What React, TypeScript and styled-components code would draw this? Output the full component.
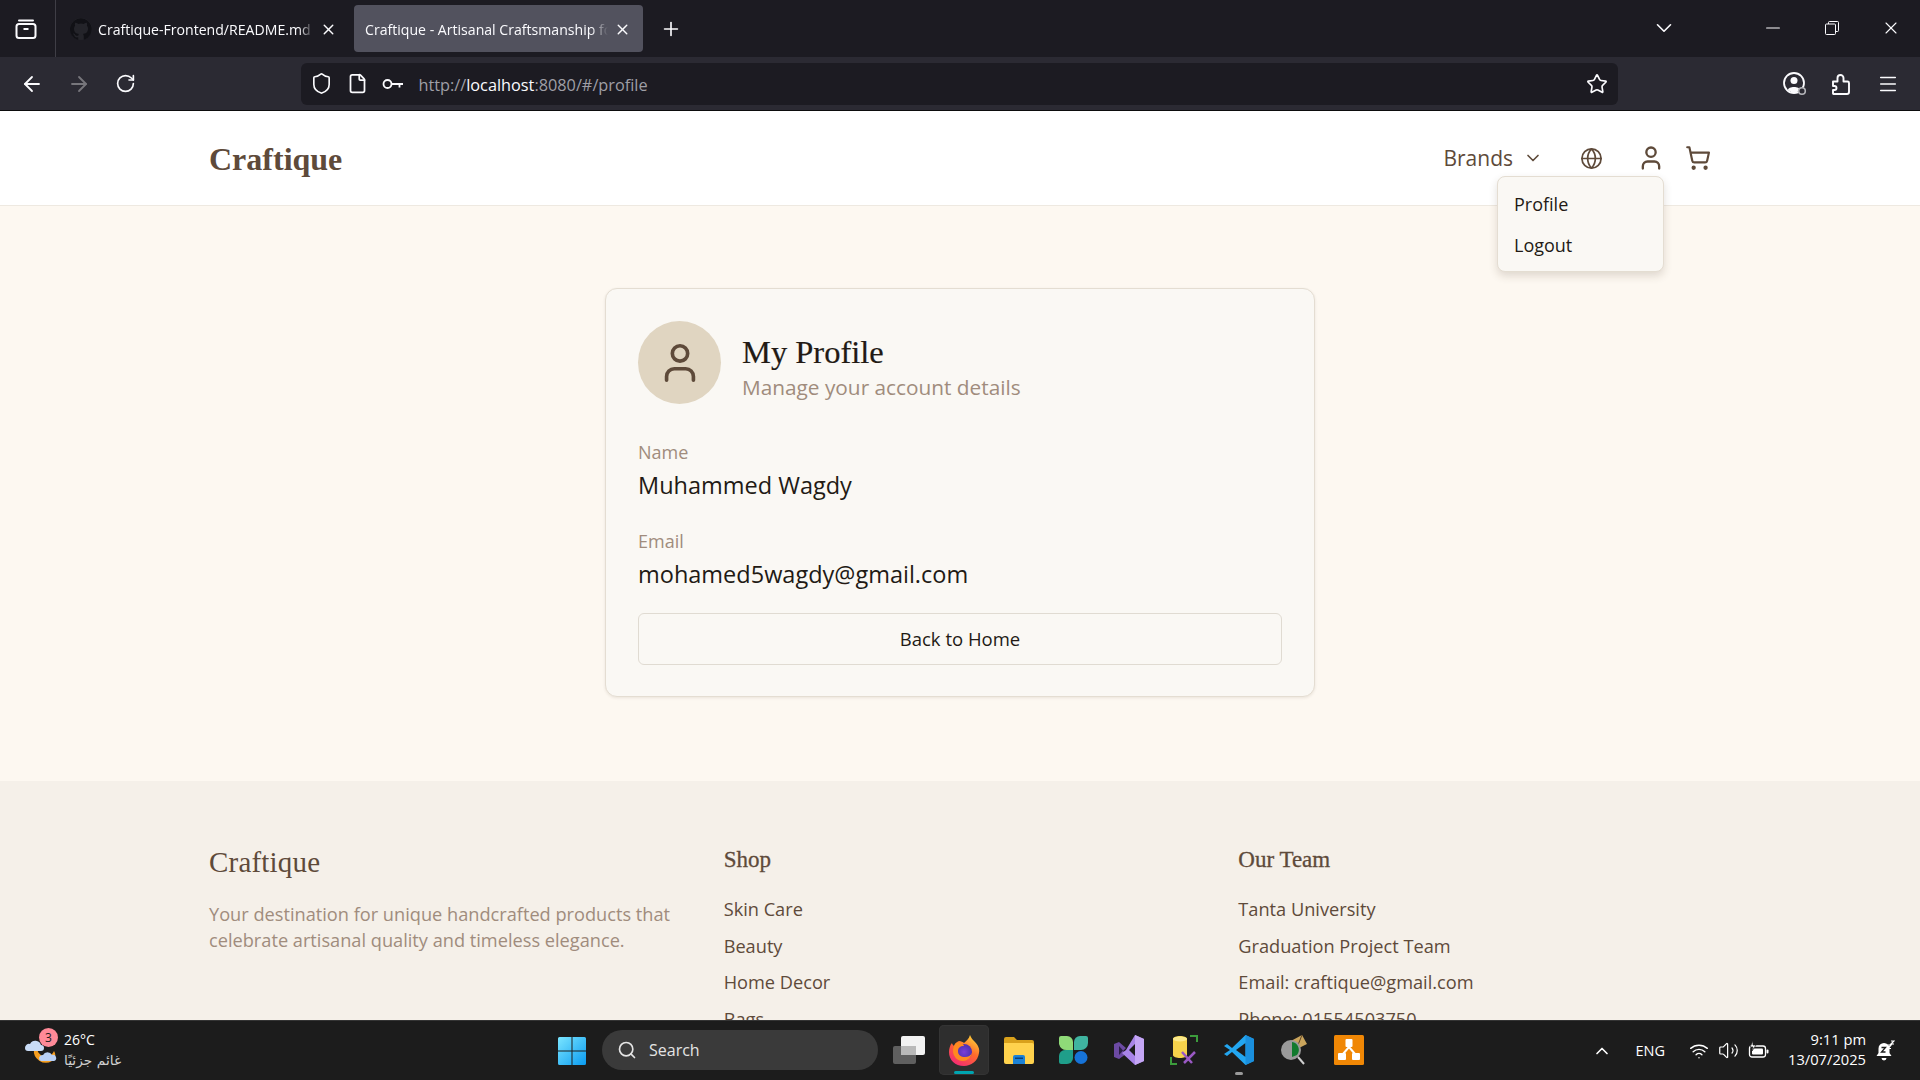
import React from 'react';
import styled, { createGlobalStyle } from 'styled-components';
import { ArrowLeft, ArrowRight, RotateCw, Shield, File, Star, Menu, X, Plus, ChevronDown, ChevronUp, Minus, Globe, User, ShoppingCart, Search, Wifi, Volume2 } from 'lucide-react';

const Global = createGlobalStyle`
  html, body { margin: 0; padding: 0; height: 100%; overflow: hidden; }
  body { font-family: "Open Sans", "Noto Sans", sans-serif; background: #fdf8f1; }
  * { box-sizing: border-box; }
`;

const SERIF = `"Liberation Serif", "Times New Roman", serif`;

const Screen = styled.div`
  width: 1920px; height: 1080px; display: flex; flex-direction: column; overflow: hidden;
`;

/* Browser chrome */
const TabRow = styled.div`
  height: 57px; background: #1c1b22; display: flex; align-items: stretch; color: #fbfbfe; flex: none;
`;
const TabManager = styled.div`
  width: 56px; display: flex; align-items: center; justify-content: center; padding-right: 3px; border-right: 1px solid #3f3e46;
`;
const Tab = styled.div<{ $active?: boolean }>`
  width: 289px; height: 47px; margin: 5px 0 0 ${p => (p.$active ? 5 : 4)}px; border-radius: 4px;
  background: ${p => (p.$active ? '#52525e' : 'transparent')};
  display: flex; align-items: center; padding: 1px 12px 0 ${p => (p.$active ? 11 : 10)}px; gap: 6px;
`;
const TabTitle = styled.span`
  flex: 1; font-size: 14.1px; white-space: nowrap; overflow: hidden; color: #fbfbfe;
  mask-image: linear-gradient(to right, #000 93%, transparent 100%);
`;
const NewTab = styled.div`
  width: 50px; margin-left: 3px; display: flex; align-items: center; justify-content: center;
`;
const Spacer = styled.div`flex: 1;`;
const TabListBtn = styled.div`
  width: 50px; margin-right: 54px; display: flex; align-items: center; justify-content: center; padding-bottom: 2px;
`;
const WinBtn = styled.div`
  width: 59px; display: flex; align-items: center; justify-content: center; padding-bottom: 1px;
`;
const Toolbar = styled.div`
  height: 54px; background: #2b2a33; border-bottom: 1px solid #0c0c0d; display: flex; align-items: center; padding: 0 9px; flex: none; color: #fbfbfe;
`;
const ToolBtn = styled.div<{ $dim?: boolean }>`
  width: 46.5px; height: 40px; display: flex; align-items: center; justify-content: center;
  color: ${p => (p.$dim ? '#77767c' : '#fbfbfe')};
`;
const UrlBar = styled.div`
  width: 1317px; height: 42px; margin: 0 154px 0 153px; background: #1c1b22; border-radius: 6px; display: flex; align-items: center; padding: 0 3px 0 2px;
`;
const UrlIcon = styled.div`
  width: 36px; display: flex; align-items: center; justify-content: center; flex: none;
`;
const UrlText = styled.div`
  flex: 1; font-size: 16.3px; color: #9f9fa6; padding: 2px 0 0 7px; white-space: nowrap;
  b { font-weight: 400; color: #fbfbfe; }
`;

/* Page */
const Viewport = styled.div`
  flex: 1; min-height: 0; overflow: hidden; position: relative; background: #fdf8f1;
`;
const Header = styled.header`
  height: 95px; background: #fff; border-bottom: 1px solid #eee9e1; position: relative;
`;
const Container = styled.div`
  width: 1504px; margin: 0 auto; height: 100%; display: flex; align-items: center; justify-content: space-between;
`;
const Logo = styled.div`
  font-family: ${SERIF}; font-weight: 700; font-size: 32px; color: #5e4a3a; padding: 2px 0 0 1px; line-height: 1;
`;
const Nav = styled.nav`
  display: flex; align-items: center; color: #5e4a3a; padding-right: 1px;
`;
const BrandsLink = styled.div`
  font-size: 21px; display: flex; align-items: center; gap: 10px; margin-right: 37px; line-height: 1;
`;
const NavIcon = styled.div<{ $mr: number }>`
  display: flex; margin-right: ${p => p.$mr}px;
`;
const Dropdown = styled.div`
  position: absolute; top: 65px; left: 1497px; width: 167px; height: 96px; background: #faf8f4;
  border: 1px solid #e4ddd2; border-radius: 8px; box-shadow: 0 4px 8px rgba(70, 50, 30, .16); padding: 6px 0; z-index: 5;
`;
const DropItem = styled.div`
  height: 41px; padding-left: 16px; display: flex; align-items: center; font-size: 18px; color: #221a14;
`;
const Main = styled.main`
  height: 575px; padding-top: 82px; display: flex; justify-content: center; background: #fdf8f1;
`;
const Card = styled.section`
  width: 710px; height: 409px; background: #faf8f4; border: 1px solid #e4ddd2; border-radius: 12px; padding: 32px;
  box-shadow: 0 1px 3px rgba(70, 50, 30, .1);
`;
const CardHead = styled.div`
  display: flex; align-items: center; gap: 21px; margin-bottom: 35px;
`;
const Avatar = styled.div`
  width: 83px; height: 83px; border-radius: 50%; background: #e0d5c1; color: #5e4a3a;
  display: flex; align-items: center; justify-content: center;
`;
const TitleBlock = styled.div`
  padding-top: 8px;
`;
const Title = styled.h1`
  margin: 0; font-family: ${SERIF}; font-weight: 400; font-size: 32.5px; line-height: 38px; color: #221a14;
  -webkit-text-stroke: .2px #221a14;
`;
const Subtitle = styled.p`
  margin: 2px 0 0; font-size: 20.8px; line-height: 28px; color: #a08c7d;
`;
const Field = styled.div`
  margin-bottom: 26px;
  &:last-of-type { margin-bottom: 22px; }
`;
const Label = styled.div`
  font-size: 18px; line-height: 26px; color: #a08c7d; margin-bottom: 3px;
`;
const Value = styled.div`
  font-size: 23.5px; line-height: 34px; color: #221a14;
`;
const BackButton = styled.button`
  width: 100%; height: 52px; background: #faf8f4; border: 1px solid #e0dbd2; border-radius: 6px; padding: 0 0 2px;
  font-family: inherit; font-size: 18.5px; font-weight: 500; color: #221a14;
`;
const Footer = styled.footer`
  background: #f5f0e9; height: 300px; padding-top: 63px;
`;
const FootGrid = styled.div`
  width: 1504px; margin: 0 auto; display: grid; grid-template-columns: repeat(3, 1fr); gap: 40px;
`;
const FootLogo = styled.div`
  font-family: ${SERIF}; font-size: 29px; line-height: 36px; color: #5e4a3a; padding-left: 1px; letter-spacing: .2px;
`;
const FootText = styled.p`
  margin: 21px 0 0; font-size: 18.2px; line-height: 26px; color: #a08c7d; padding-left: 1px;
`;
const FootCol = styled.div`
  padding-left: 1px;
`;
const FootHead = styled.h3`
  margin: 0 0 15px; font-family: ${SERIF}; font-size: 23px; font-weight: 400; line-height: 32px; color: #5e4a3a;
  -webkit-text-stroke: .3px #5e4a3a;
`;
const FootLink = styled.div`
  font-size: 18.2px; line-height: 36.6px; color: #5e4a3a; white-space: nowrap;
`;

/* Taskbar */
const Taskbar = styled.div`
  height: 60px; flex: none; background: #1c1c1c; border-top: 1px solid #343434; display: flex; align-items: stretch; color: #fff;
`;
const Weather = styled.div`
  width: 544px; display: flex; align-items: center; padding-left: 24px; position: relative;
`;
const Badge = styled.div`
  position: absolute; left: 39px; top: 7px; width: 19px; height: 19px; border-radius: 50%; background: #ff8a98; color: #1c1c1c;
  font-size: 12px; display: flex; align-items: center; justify-content: center;
`;
const WeatherText = styled.div`
  margin: -2px 0 0 7px; display: flex; flex-direction: column; gap: 2px;
`;
const Temp = styled.div`font-size: 14px; line-height: 19px; color: #fff;`;
const Cond = styled.div`font-family: "DejaVu Sans", sans-serif; font-size: 13.8px; line-height: 18px; color: #d0d0d0;`;
const StartBtn = styled.div`
  width: 55px; display: flex; align-items: center; justify-content: center;
`;
const SearchPill = styled.div`
  width: 276px; height: 40px; margin: 9px 3px 0 3px; border-radius: 20px; background: #3a3a3a; display: flex; align-items: center;
  padding-left: 15px; gap: 12px; font-size: 16px; color: #e4e4e4;
`;
const TaskBtn = styled.div<{ $active?: boolean }>`
  width: 50px; height: 50px; margin: 4px 2.5px 0; border-radius: 5px; position: relative; display: flex; align-items: center; justify-content: center;
  background: ${p => (p.$active ? '#2e2e2e' : 'transparent')};
  box-shadow: ${p => (p.$active ? 'inset 0 0 0 1px #343434' : 'none')};
`;
const RunDot = styled.div<{ $active?: boolean }>`
  position: absolute; bottom: ${p => (p.$active ? 1 : 0)}px; left: 50%; transform: translateX(-50%); height: 3px; border-radius: 2px;
  width: ${p => (p.$active ? 20 : 8)}px; background: ${p => (p.$active ? '#00a4b0' : '#9a9a9a')};
`;
const Tray = styled.div`
  margin-left: auto; display: flex; align-items: center; padding-right: 25px; color: #fff;
`;
const Lang = styled.div`font-size: 14.5px; margin: 0 24px 0 24px;`;
const TrayIcon = styled.div<{ $mr?: number }>`
  display: flex; margin-right: ${p => p.$mr ?? 9}px;
`;
const Clock = styled.div`
  text-align: right; font-size: 14.7px; line-height: 20px; margin: 0 9px 4px 18px;
`;

const GitHubMark = () => (
  <svg width="22" height="22" viewBox="0 0 16 16"><circle cx="8" cy="8" r="8" fill="#24242a"/><path fill="#111116" d="M8 .2a8 8 0 0 0-2.5 15.6c.4.1.5-.2.5-.4v-1.4c-2.2.5-2.7-1-2.7-1-.4-.9-.9-1.200-.9-1.200-.7-.5.1-.5.1-.5.8.100 1.200.8 1.200.8.7 1.200 1.900.900 2.300.7.100-.5.300-.9.500-1.100-1.800-.2-3.600-.9-3.600-4 0-.9.300-1.600.800-2.100-.1-.2-.4-1 .1-2.100 0 0 .7-.2 2.200.8a7.600 7.600 0 0 1 4 0c1.500-1 2.200-.8 2.200-.8.4 1.100.2 1.900.1 2.100.5.600.8 1.300.8 2.100 0 3.100-1.900 3.700-3.700 3.900.3.300.6.800.6 1.500v2.200c0 .2.100.5.600.4A8 8 0 0 0 8 .2z"/></svg>
);
const TabBox = () => (
  <svg width="22" height="22" viewBox="0 0 22 22" fill="none" stroke="#fbfbfe" strokeWidth="2"><path d="M4 2.500h14" strokeLinecap="round"/><rect x="1.500" y="6" width="19" height="14" rx="2.500"/><path d="M8.500 11h5"/></svg>
);
const KeyIcon = () => (
  <svg width="22" height="12" viewBox="0 0 22 12" fill="none" stroke="#fbfbfe" strokeWidth="1.800"><circle cx="5.500" cy="6" r="4"/><path d="M9.500 6H21M17.500 6v3.500"/></svg>
);
const ProfileIcon = () => (
  <svg width="26" height="26" viewBox="0 0 26 26" fill="none"><circle cx="12" cy="12" r="10" stroke="#fbfbfe" strokeWidth="1.800"/><circle cx="12" cy="9.500" r="3.500" fill="#fbfbfe"/><path d="M6 19c0-4 12-4 12 0l-3 2H9z" fill="#fbfbfe"/><circle cx="20" cy="20" r="3.300" fill="#2b2a33" stroke="#b5b5ba" strokeWidth="1.600"/></svg>
);
const ExtensionIcon = () => (
  <svg width="24" height="24" viewBox="0 0 24 24" fill="none" stroke="#fbfbfe" strokeWidth="1.900" strokeLinejoin="round"><path d="M4.500 22H18a2 2 0 0 0 2-2V11a1.500 1.500 0 0 0-1.500-1.500h-4V6a3 3 0 0 0-6 0v3.500H4V14h1.500a2 2 0 0 1 0 4H4v3.500a.5.5 0 0 0 .5.5z"/></svg>
);
const RestoreIcon = () => (
  <svg width="14" height="14" viewBox="0 0 14 14" fill="none" stroke="#fbfbfe" strokeWidth="1"><rect x=".5" y="3" width="10" height="10.500" rx="1"/><path d="M3.500 3V1.500a1 1 0 0 1 1-1h8a1 1 0 0 1 1 1v8a1 1 0 0 1-1 1h-2"/></svg>
);

const WeatherIcon = () => (
  <svg width="33" height="36" viewBox="0 0 33 36">
    <path d="M10 16a12 12 0 0 0 18 12c4-2 4-7 2-10-2 5-8 7-12 5-3-2-5-5-5-8z" fill="#f59e1f"/>
    <path d="M1 15a4 4 0 0 1 5-4 6 6 0 0 1 11 1 3 3 0 0 1 0 6H4a3 3 0 0 1-3-3z" fill="#c9dcf7"/>
    <path d="M15 25a4 4 0 0 1 4-3 5 5 0 0 1 9 0 3 3 0 0 1 2 6H17a3 3 0 0 1-2-3z" fill="#b8d0f5"/>
  </svg>
);
const WinLogo = () => (
  <svg width="30" height="30" viewBox="0 0 30 30">
    <defs><linearGradient id="wl" x1="0" y1="0" x2="1" y2="1"><stop offset="0" stopColor="#7be5ff"/><stop offset="1" stopColor="#0a9bf0"/></linearGradient></defs>
    <path fill="url(#wl)" d="M1 2.500A1.500 1.500 0 0 1 2.500 1h12v13.500H1zM15.500 1h12A1.500 1.500 0 0 1 29 2.500v12H15.500zM1 15.500h13.500V29h-12A1.500 1.500 0 0 1 1 27.500zM15.500 15.500H29v12a1.500 1.500 0 0 1-1.500 1.500h-12z"/>
  </svg>
);
const TaskView = () => (
  <svg width="32" height="28" viewBox="0 0 32 28">
    <rect x="0" y="10" width="23" height="18" rx="2" fill="#5f5f5f"/>
    <rect x="8" y="0" width="24" height="19" rx="2" fill="#f2f2f2"/>
    <rect x="8" y="10" width="15" height="9" fill="#b9b9b9"/>
  </svg>
);
const Firefox = () => (
  <svg width="32" height="32" viewBox="0 0 32 32">
    <defs>
      <linearGradient id="ff" x1="0.8" y1="0" x2="0.2" y2="1"><stop offset="0" stopColor="#ffd53a"/><stop offset=".45" stopColor="#ff6b2a"/><stop offset="1" stopColor="#f3267a"/></linearGradient>
      <radialGradient id="fp"><stop offset="0" stopColor="#7b3fd6"/><stop offset="1" stopColor="#4d2fb0"/></radialGradient>
    </defs>
    <path fill="url(#ff)" d="M22 1c1 3 3 5 5 7 3 3 5 7 4 11-1 8-8 13-15 13C7 32 1 26 1 18c0-3 1-7 3-9 0 1 1 2 2 3 1-3 3-4 5-5 2 0 4 1 5 2 2-2 5-4 6-8z"/>
    <circle cx="16" cy="18" r="8" fill="url(#fp)"/>
    <path d="M8 9c4-1 8 1 8 3-4 0-6 2-6 5 0 4 3 6 7 6 3 0 5-1 7-4-1 5-5 8-9 8-6 0-10-5-10-10 0-3 1-6 3-8z" fill="#ff8a1f"/>
  </svg>
);
const Folder = () => (
  <svg width="30" height="28" viewBox="0 0 30 28">
    <path d="M0 3a2 2 0 0 1 2-2h8l3 3h15a2 2 0 0 1 2 2v4H0z" fill="#d9a11b"/>
    <path d="M0 7h28a2 2 0 0 1 2 2v17a2 2 0 0 1-2 2H2a2 2 0 0 1-2-2z" fill="#ffd24d"/>
    <path d="M9 28v-7a2 2 0 0 1 2-2h8a2 2 0 0 1 2 2v7z" fill="#1b82d6"/>
    <rect x="11" y="21.500" width="8" height="1.500" fill="#0b3f7a"/>
  </svg>
);
const Petals = () => (
  <svg width="29" height="28" viewBox="0 0 29 28">
    <path d="M0 2a2 2 0 0 1 2-2h6a6 6 0 0 1 6 6v8H8a8 8 0 0 1-8-6z" fill="#8fda78"/>
    <path d="M15 6a6 6 0 0 1 6-6h6a2 2 0 0 1 2 2v5a7 7 0 0 1-7 7h-7z" fill="#3fb4a0"/>
    <path d="M0 20a6 6 0 0 1 6-6h8v8a6 6 0 0 1-6 6H2a2 2 0 0 1-2-2z" fill="#1f9e8a"/>
    <circle cx="22" cy="21.500" r="6.500" fill="#1673d8"/>
  </svg>
);
const VisualStudio = () => (
  <svg width="30" height="30" viewBox="0 0 30 30">
    <path d="M0 9l5-2 7 6-3 3 3 3-7 5-5-2z" fill="#6c4aa3"/>
    <path d="M5 11v9l4-4.500z" fill="#2b1f45"/>
    <path d="M21 0l9 4v22l-9 4L8 18l4-3z" fill="#a884e8"/>
    <path d="M21 0l9 4v22l-9 4z" fill="#c4a6f5"/>
    <path d="M21 9l-6 6 6 6z" fill="#1c1c1c"/>
  </svg>
);
const SqlTool = () => (
  <svg width="28" height="30" viewBox="0 0 28 30" fill="none">
    <path d="M3 4c0-4 14-4 14 0v16c0 4-14 4-14 0z" fill="#f5d24b"/>
    <ellipse cx="10" cy="4" rx="7" ry="2.500" fill="#fbe98a"/>
    <path d="M20 1h7v6M1 22v7h6" stroke="#3c9c3c" strokeWidth="2"/>
    <path d="M12 17l10 11M25 17L14 28" stroke="#9a59c4" strokeWidth="2.500"/>
  </svg>
);
const VSCode = () => (
  <svg width="30" height="30" viewBox="0 0 30 30">
    <path d="M21.500 0L30 4v22l-8.500 4L8 17l-5 4-3-2 6-4-6-4 3-2 5 4z" fill="#23a6f0"/>
    <path d="M21.500 8v14L12 15z" fill="#1c1c1c"/>
    <path d="M21.500 0L30 4v22l-8.500 4z" fill="#1a8fdd"/>
  </svg>
);
const Sniffer = () => (
  <svg width="28" height="30" viewBox="0 0 28 30">
    <path d="M9 7l13-7 5 9-12 6z" fill="#c9a45c"/>
    <path d="M9 7l9 3 4-10" fill="none" stroke="#5c4526" strokeWidth="1"/>
    <circle cx="11" cy="15" r="10" fill="#9a9a9a"/>
    <path d="M12 7a8 8 0 0 1 5 13l-5 2z" fill="#127a2e"/>
    <path d="M18 22l6 7" stroke="#cfcfcf" strokeWidth="2"/>
  </svg>
);
const DrawIo = () => (
  <svg width="30" height="30" viewBox="0 0 30 30">
    <rect width="30" height="30" rx="1.500" fill="#f08705"/>
    <path d="M15 12L9 19M15 12l6 7" stroke="#fff" strokeWidth="2"/>
    <rect x="11.500" y="4" width="7" height="8" rx="1" fill="#fff"/>
    <rect x="4" y="18" width="8" height="7" rx="1" fill="#fff"/>
    <rect x="18" y="18" width="8" height="7" rx="1" fill="#fff"/>
  </svg>
);
const Battery = () => (
  <svg width="22" height="20" viewBox="0 0 22 20" fill="none">
    <rect x="1.500" y="5" width="16" height="11" rx="2.500" stroke="#fff" strokeWidth="1.300"/>
    <rect x="4" y="7.500" width="11" height="6" rx="1" fill="#fff"/>
    <rect x="18.500" y="8.500" width="2" height="4" rx="1" fill="#fff"/>
    <path d="M5 0L2 6h3l-1 4 4-6H5z" fill="#fff" stroke="#1c1c1c" strokeWidth=".7"/>
  </svg>
);
const BellSleep = () => (
  <svg width="20" height="22" viewBox="0 0 20 22">
    <path d="M9 3a5.500 5.500 0 0 1 5.500 5.500V13l2 3H1.500l2-3V8.500A5.500 5.500 0 0 1 9 3z" fill="#fff"/>
    <path d="M6.500 18h5a2.500 2.500 0 0 1-5 0z" fill="#fff"/>
    <path d="M6.500 7.500h4l-4 4.500h4" fill="none" stroke="#1c1c1c" strokeWidth="1.300"/>
    <path d="M13 5h3l-3 3.500h3M16 1h3l-3 3h3" fill="none" stroke="#fff" strokeWidth="1.200"/>
  </svg>
);

const shopLinks = ['Skin Care', 'Beauty', 'Home Decor', 'Bags'];
const teamLinks = ['Tanta University', 'Graduation Project Team', 'Email: craftique@gmail.com', 'Phone: 01554503750'];

export default function App() {
  return (
    <Screen>
      <Global />
      <TabRow>
        <TabManager><TabBox /></TabManager>
        <Tab>
          <GitHubMark />
          <TabTitle>Craftique-Frontend/README.md at main</TabTitle>
          <X size={17} strokeWidth={2} />
        </Tab>
        <Tab $active>
          <TabTitle>Craftique - Artisanal Craftsmanship for Modern</TabTitle>
          <X size={17} strokeWidth={2} />
        </Tab>
        <NewTab><Plus size={22} strokeWidth={1.800} /></NewTab>
        <Spacer />
        <TabListBtn><ChevronDown size={26} strokeWidth={1.500} /></TabListBtn>
        <WinBtn><Minus size={22} strokeWidth={1.100} /></WinBtn>
        <WinBtn><RestoreIcon /></WinBtn>
        <WinBtn><X size={20} strokeWidth={1.300} /></WinBtn>
      </TabRow>
      <Toolbar>
        <ToolBtn><ArrowLeft size={24} strokeWidth={1.800} /></ToolBtn>
        <ToolBtn $dim><ArrowRight size={24} strokeWidth={1.800} /></ToolBtn>
        <ToolBtn><RotateCw size={21} strokeWidth={1.900} /></ToolBtn>
        <UrlBar>
          <UrlIcon><Shield size={23} strokeWidth={1.700} color="#fbfbfe" /></UrlIcon>
          <UrlIcon><File size={21} strokeWidth={2} color="#fbfbfe" /></UrlIcon>
          <UrlIcon><KeyIcon /></UrlIcon>
          <UrlText>http://<b>localhost</b>:8080/#/profile</UrlText>
          <UrlIcon><Star size={22} strokeWidth={1.800} color="#fbfbfe" /></UrlIcon>
        </UrlBar>
        <ToolBtn><ProfileIcon /></ToolBtn>
        <ToolBtn><ExtensionIcon /></ToolBtn>
        <ToolBtn><Menu size={22} strokeWidth={1.600} /></ToolBtn>
      </Toolbar>

      <Viewport>
        <Header>
          <Container>
            <Logo>Craftique</Logo>
            <Nav>
              <BrandsLink>Brands <ChevronDown size={20} strokeWidth={2} /></BrandsLink>
              <NavIcon $mr={34}><Globe size={23} strokeWidth={1.800} /></NavIcon>
              <NavIcon $mr={20}><User size={28} strokeWidth={2} /></NavIcon>
              <NavIcon $mr={0}><ShoppingCart size={26} strokeWidth={2} /></NavIcon>
            </Nav>
          </Container>
          <Dropdown>
            <DropItem>Profile</DropItem>
            <DropItem>Logout</DropItem>
          </Dropdown>
        </Header>
        <Main>
          <Card>
            <CardHead>
              <Avatar><User size={46} strokeWidth={1.900} /></Avatar>
              <TitleBlock>
                <Title>My Profile</Title>
                <Subtitle>Manage your account details</Subtitle>
              </TitleBlock>
            </CardHead>
            <Field>
              <Label>Name</Label>
              <Value>Muhammed Wagdy</Value>
            </Field>
            <Field>
              <Label>Email</Label>
              <Value>mohamed5wagdy@gmail.com</Value>
            </Field>
            <BackButton>Back to Home</BackButton>
          </Card>
        </Main>
        <Footer>
          <FootGrid>
            <div>
              <FootLogo>Craftique</FootLogo>
              <FootText>Your destination for unique handcrafted products that celebrate artisanal quality and timeless elegance.</FootText>
            </div>
            <FootCol>
              <FootHead>Shop</FootHead>
              {shopLinks.map(l => <FootLink key={l}>{l}</FootLink>)}
            </FootCol>
            <FootCol>
              <FootHead>Our Team</FootHead>
              {teamLinks.map(l => <FootLink key={l}>{l}</FootLink>)}
            </FootCol>
          </FootGrid>
        </Footer>
      </Viewport>

      <Taskbar>
        <Weather>
          <WeatherIcon />
          <Badge>3</Badge>
          <WeatherText>
            <Temp>26°C</Temp>
            <Cond>غائم جزئيًا</Cond>
          </WeatherText>
        </Weather>
        <StartBtn><WinLogo /></StartBtn>
        <SearchPill><Search size={20} strokeWidth={2} />Search</SearchPill>
        <TaskBtn><TaskView /></TaskBtn>
        <TaskBtn $active><Firefox /><RunDot $active /></TaskBtn>
        <TaskBtn><Folder /></TaskBtn>
        <TaskBtn><Petals /></TaskBtn>
        <TaskBtn><VisualStudio /></TaskBtn>
        <TaskBtn><SqlTool /></TaskBtn>
        <TaskBtn><VSCode /><RunDot /></TaskBtn>
        <TaskBtn><Sniffer /></TaskBtn>
        <TaskBtn><DrawIo /></TaskBtn>
        <Tray>
          <TrayIcon $mr={0}><ChevronUp size={20} strokeWidth={2} /></TrayIcon>
          <Lang>ENG</Lang>
          <TrayIcon><Wifi size={20} strokeWidth={1.700} /></TrayIcon>
          <TrayIcon><Volume2 size={21} strokeWidth={1.400} /></TrayIcon>
          <TrayIcon $mr={0}><Battery /></TrayIcon>
          <Clock>9:11 pm<br />13/07/2025</Clock>
          <BellSleep />
        </Tray>
      </Taskbar>
    </Screen>
  );
}
